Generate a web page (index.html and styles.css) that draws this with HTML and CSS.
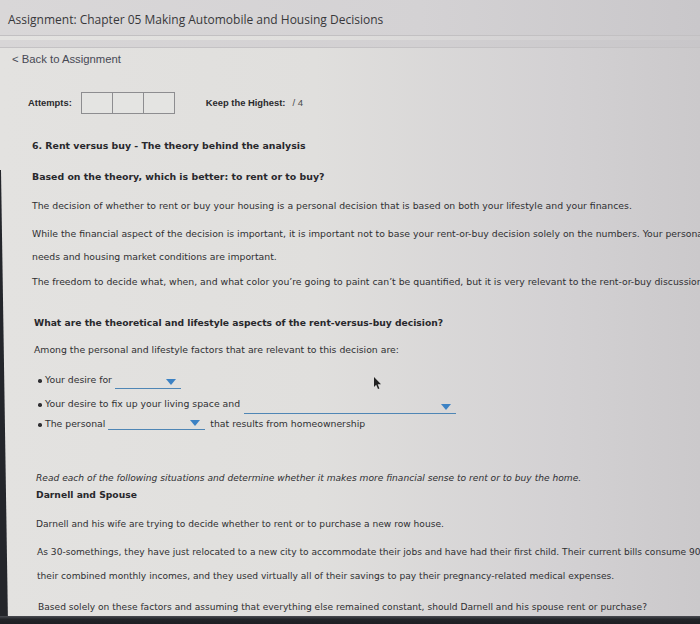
FILE: index.html
```html
<!DOCTYPE html>
<html>
<head>
<meta charset="utf-8">
<link rel="stylesheet" href="styles.css">
</head>
<body>
<div class="page">
  <header class="topbar">
    <h1 class="title">Assignment: Chapter 05 Making Automobile and Housing Decisions</h1>
  </header>
  <div class="subbar"></div>
  <nav class="back">&lt; Back to Assignment</nav>
  <main class="content">
    <div class="attempts">
      <span class="lbl">Attempts:</span>
      <span class="boxes"><span class="box"></span><span class="box"></span><span class="box"></span></span>
      <span class="lbl keep">Keep the Highest:</span>
      <span class="score">/ 4</span>
    </div>
    <h2 class="qtitle">6. Rent versus buy - The theory behind the analysis</h2>
    <h3 class="sub">Based on the theory, which is better: to rent or to buy?</h3>
    <p class="p1">The decision of whether to rent or buy your housing is a personal decision that is based on both your lifestyle and your finances.</p>
    <p class="p2">While the financial aspect of the decision is important, it is important not to base your rent-or-buy decision solely on the numbers. Your personal<br>needs and housing market conditions are important.</p>
    <p class="p3">The freedom to decide what, when, and what color you’re going to paint can’t be quantified, but it is very relevant to the rent-or-buy discussion.</p>
    <h3 class="sub2">What are the theoretical and lifestyle aspects of the rent-versus-buy decision?</h3>
    <p class="p4">Among the personal and lifestyle factors that are relevant to this decision are:</p>
    <ul class="list">
      <li class="li1">Your desire for <span class="dd dd1"><span class="arrow"></span></span>
        <svg class="cursor" width="9" height="13" viewBox="0 0 9 13"><path d="M1 0 L1 10 L3.2 7.8 L5 12 L6.4 11.4 L4.7 7.3 L8 7.3 Z" fill="#222"/></svg>
      </li>
      <li class="li2">Your desire to fix up your living space and <span class="dd dd2"><span class="arrow"></span></span></li>
      <li class="li3">The personal <span class="dd dd3"><span class="arrow"></span></span> that results from homeownership</li>
    </ul>
    <p class="ital">Read each of the following situations and determine whether it makes more financial sense to rent or to buy the home.</p>
    <h3 class="case">Darnell and Spouse</h3>
    <p class="p5">Darnell and his wife are trying to decide whether to rent or to purchase a new row house.</p>
    <p class="p6">As 30-somethings, they have just relocated to a new city to accommodate their jobs and have had their first child. Their current bills consume 90% of<br>their combined monthly incomes, and they used virtually all of their savings to pay their pregnancy-related medical expenses.</p>
    <p class="p7">Based solely on these factors and assuming that everything else remained constant, should Darnell and his spouse rent or purchase?</p>
  </main>
  <div class="bezel-left"></div>
  <div class="bezel-bottom"></div>
</div>
</body>
</html>
```
FILE: styles.css
```css
html, body { margin: 0; padding: 0; }
body {
  width: 700px; height: 624px; overflow: hidden;
  background: #d6d4d6;
  font-family: "DejaVu Sans", Verdana, sans-serif;
  color: #2f2f32;
}
.page {
  position: relative; width: 700px; height: 624px; overflow: hidden;
  background: linear-gradient(90deg, #e3e2e0 0%, #e0dfdd 45%, #d3d1d3 80%, #cbc9cb 100%);
}
.topbar {
  height: 36px;
  background: linear-gradient(90deg, #d9d7d8 0%, #d4d2d4 60%, #c9c7ca 100%);
  border-bottom: 1px solid #c2c0c2;
  padding: 4px 0 0 8px;
  display: flex; align-items: center;
  box-sizing: border-box;
}
.title {
  margin: 0;
  font-family: "Open Sans", sans-serif; font-weight: 400;
  font-size: 12px; color: #38383b;
}
.subbar {
  height: 7px; border-bottom: 1px solid #c4c2c4;
  background: linear-gradient(90deg, #d8d6d7 0%, #d2d0d2 60%, #c8c6c9 100%);
  margin-top: 4px;
}
.back {
  font-family: "Liberation Sans", Arial, sans-serif;
  font-size: 11.3px; color: #474955;
  padding: 4px 0 0 12px; height: 14px; line-height: 14px;
}
.content {
  padding: 0 0 0 32px;
  font-size: 9.3px; line-height: 12px;
  white-space: nowrap;
}
.attempts {
  display: flex; align-items: center;
  margin-left: -4px; margin-top: 26px; height: 22px;
  font-family: "Liberation Sans", Arial, sans-serif;
}
.lbl { font-weight: bold; font-size: 9.4px; color: #2a2a2d; }
.boxes { display: flex; margin-left: 9px; border: 1px solid #8d8d90; background: #e4e4e2; }
.box { width: 30px; height: 20px; border-left: 1px solid #8d8d90; }
.box:first-child { border-left: none; }
.keep { margin-left: 31px; }
.score { margin-left: 7px; font-size: 9.6px; color: #4a4a4d; }
h2, h3 { font-weight: bold; color: #28282c; }
.qtitle { margin: 26px 0 0; font-size: 9.4px; line-height: 12px; }
.sub { margin: 19px 0 0; font-size: 9.4px; line-height: 12px; }
.sub2 { margin: 29px 0 0 2px; font-size: 9.2px; line-height: 12px; }
p { margin: 0; }
.p1 { margin-top: 17px; }
.p2 { margin-top: 9.5px; line-height: 23px; }
.p3 { margin-top: 8.5px; }
.p4 { margin: 15px 0 0 2px; }
.list { list-style: none; margin: 16px 0 0; padding: 0 0 0 6px; }
.list li { position: relative; padding-left: 7px; height: 16px; line-height: 16px; }
.list li::before {
  content: ""; position: absolute; left: 0; top: 7px;
  width: 3.5px; height: 3.5px; border-radius: 50%; background: #2f2f32;
}
.li2 { margin-top: 8px; }
.li3 { margin-top: 4px; }
.dd {
  display: inline-block; position: relative; vertical-align: top;
  border-bottom: 1px solid #4f86b5; height: 13px;
}
.dd1 { width: 66px; top: 3px; margin-left: 0; }
.dd2 { width: 212px; top: 4px; margin-left: 1px; }
.dd3 { width: 97px; top: 0; margin-left: 0; margin-right: 2px; }
.arrow {
  position: absolute; right: 5px; bottom: 3px;
  width: 0; height: 0;
  border-left: 5px solid transparent; border-right: 5px solid transparent;
  border-top: 6px solid #3c82c4;
}
.cursor { position: absolute; left: 335px; top: 5px; }
.ital { margin: 40px 0 0 4px; font-style: italic; font-size: 9.1px; }
.case { margin: 5px 0 0 4px; font-size: 9.2px; line-height: 12px; }
.p5 { margin: 17px 0 0 4px; font-size: 9.1px; }
.p6 { margin: 10px 0 0 5px; line-height: 24px; font-size: 9.1px; }
.p7 { margin: 13px 0 0 6px; font-size: 9.1px; }
.bezel-left {
  position: absolute; left: 0; top: 0; width: 10px; height: 624px;
  background: #24262b;
  clip-path: polygon(0 170px, 1px 170px, 8px 624px, 0 624px);
}
.bezel-bottom {
  position: absolute; left: 0; bottom: 0; width: 700px; height: 8px;
  background: linear-gradient(180deg, #4a4c52 0%, #232529 40%, #1d1f23 100%);
}
```
